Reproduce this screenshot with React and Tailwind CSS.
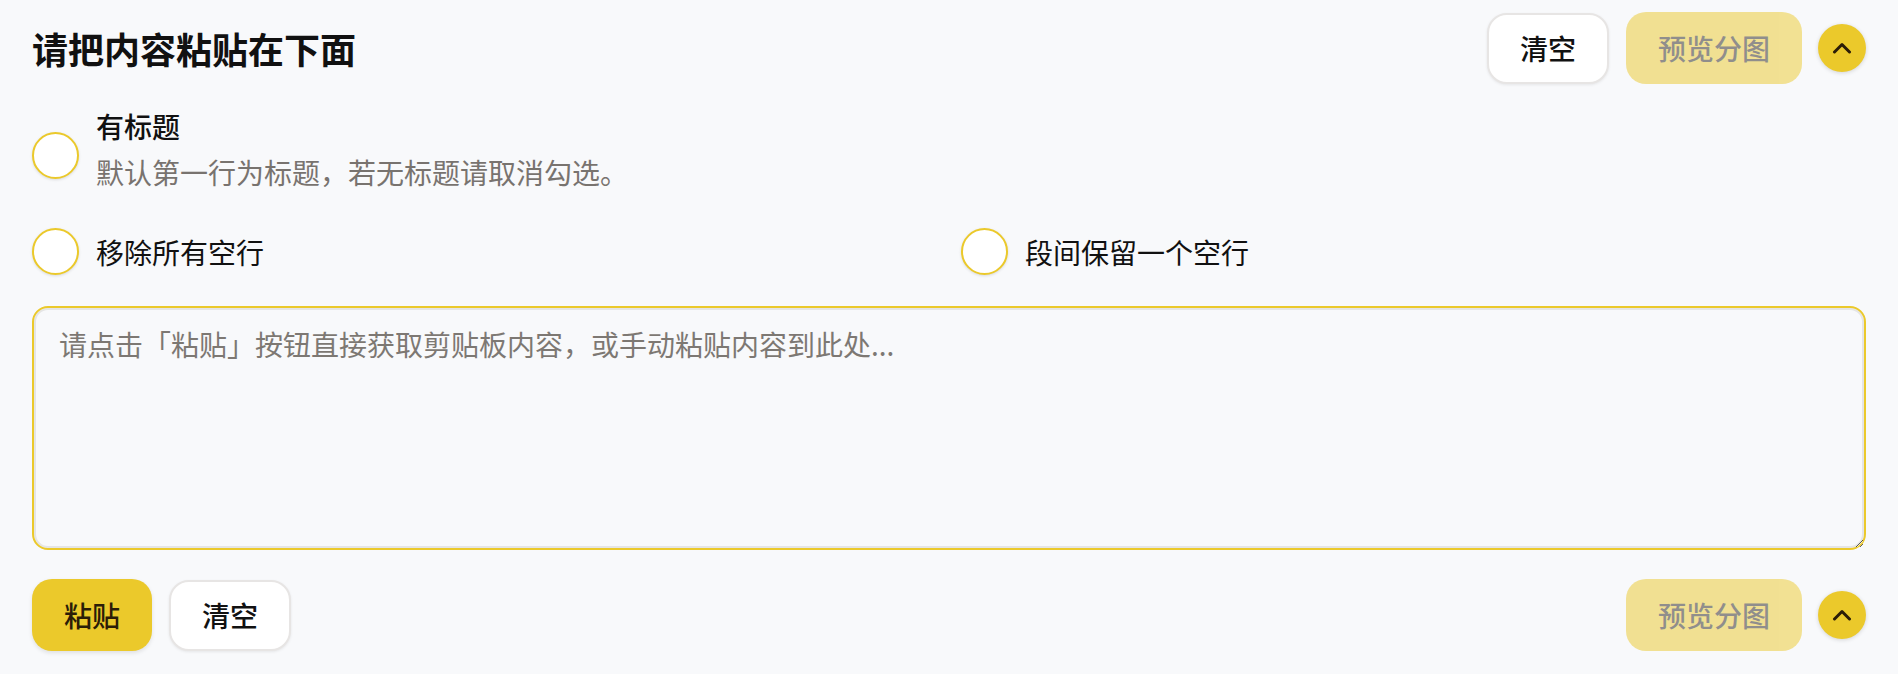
import React, { useState } from 'react';

// ─── Small pieces ─────────────────────────────────────────────────────────────

const FONT = { fontFamily: '"Noto Sans CJK SC", "Noto Sans", sans-serif' };

const Radio = ({ className = '' }) => (
  <span
    className={`shrink-0 w-[47px] h-[47px] rounded-full bg-white border-2 border-[#ebc92b] shadow-[0_1px_3px_rgba(0,0,0,0.12)] ${className}`}
  />
);

const ChevronBtn = () => (
  <button className="shrink-0 w-12 h-12 rounded-full bg-[#ebc92b] flex items-center justify-center shadow-[0_1px_4px_rgba(0,0,0,0.15)]">
    <svg width="20" height="12" viewBox="0 0 20 12" fill="none">
      <path d="M2.5 10 L10 2.5 L17.5 10" stroke="#2b1d07" strokeWidth="3" strokeLinecap="round" strokeLinejoin="round" />
    </svg>
  </button>
);

const WhiteBtn = ({ children }) => (
  <button className="h-[71px] px-[31px] rounded-[20px] bg-white border-2 border-[#e7e5e4] shadow-[0_1px_3px_rgba(0,0,0,0.08)] text-[28px] leading-[36px] font-medium text-[#111]">
    {children}
  </button>
);

const PreviewBtn = () => (
  <button
    disabled
    className="h-[72px] px-[32px] rounded-[20px] bg-[#ebc92b] opacity-50 text-[28px] leading-[36px] font-medium text-[#2a2620] cursor-not-allowed"
  >
    预览分图
  </button>
);

// ─── Main ─────────────────────────────────────────────────────────────────────

export default function App() {
  const [text, setText] = useState('');

  return (
    <div className="min-h-[674px] bg-[#f8f9fb] px-8 pt-3 pb-[22px] text-[#111]" style={FONT}>
      {/* Header */}
      <div className="h-[72px] flex items-center justify-between">
        <h1 className="text-[36px] leading-[44px] font-bold">请把内容粘贴在下面</h1>
        <div className="flex items-center">
          <WhiteBtn>清空</WhiteBtn>
          <div className="ml-[17px]"><PreviewBtn /></div>
          <div className="ml-4"><ChevronBtn /></div>
        </div>
      </div>

      {/* Has title option */}
      <label className="mt-[22px] flex items-start gap-4 cursor-pointer">
        <Radio className="mt-[26px]" />
        <div className="pl-[1px]">
          <div className="text-[28px] leading-[40px] font-medium">有标题</div>
          <div className="mt-[6px] text-[28px] leading-[40px] text-[#78736f]">默认第一行为标题，若无标题请取消勾选。</div>
        </div>
      </label>

      {/* Blank line options */}
      <div className="mt-[36px] grid grid-cols-2 gap-6">
        <label className="flex items-center gap-4 cursor-pointer">
          <Radio />
          <span className="text-[28px] leading-[40px] pl-[1px]">移除所有空行</span>
        </label>
        <label className="flex items-center gap-4 cursor-pointer">
          <Radio />
          <span className="text-[28px] leading-[40px] pl-[1px]">段间保留一个空行</span>
        </label>
      </div>

      {/* Input */}
      <textarea
        value={text}
        onChange={e => setText(e.target.value)}
        placeholder="请点击「粘贴」按钮直接获取剪贴板内容，或手动粘贴内容到此处..."
        className="mt-[31px] block w-full h-[244px] rounded-[16px] border-2 border-[#ebc92b] shadow-[inset_0_0_0_2px_#e5e5e5] bg-[#f8f9fb] pl-[25px] pr-6 pt-[16px] text-[28px] leading-[40px] text-[#111] placeholder:text-[#7d7873] outline-none"
        style={FONT}
      />

      {/* Footer actions */}
      <div className="mt-[29px] flex items-center justify-between">
        <div className="flex items-center gap-[17px]">
          <button className="h-[72px] px-[32px] rounded-[20px] bg-[#ebc92b] shadow-[0_2px_4px_rgba(0,0,0,0.1)] text-[28px] leading-[36px] font-medium text-[#2b1d07]">
            粘贴
          </button>
          <WhiteBtn>清空</WhiteBtn>
        </div>
        <div className="flex items-center gap-4">
          <PreviewBtn />
          <ChevronBtn />
        </div>
      </div>
    </div>
  );
}
